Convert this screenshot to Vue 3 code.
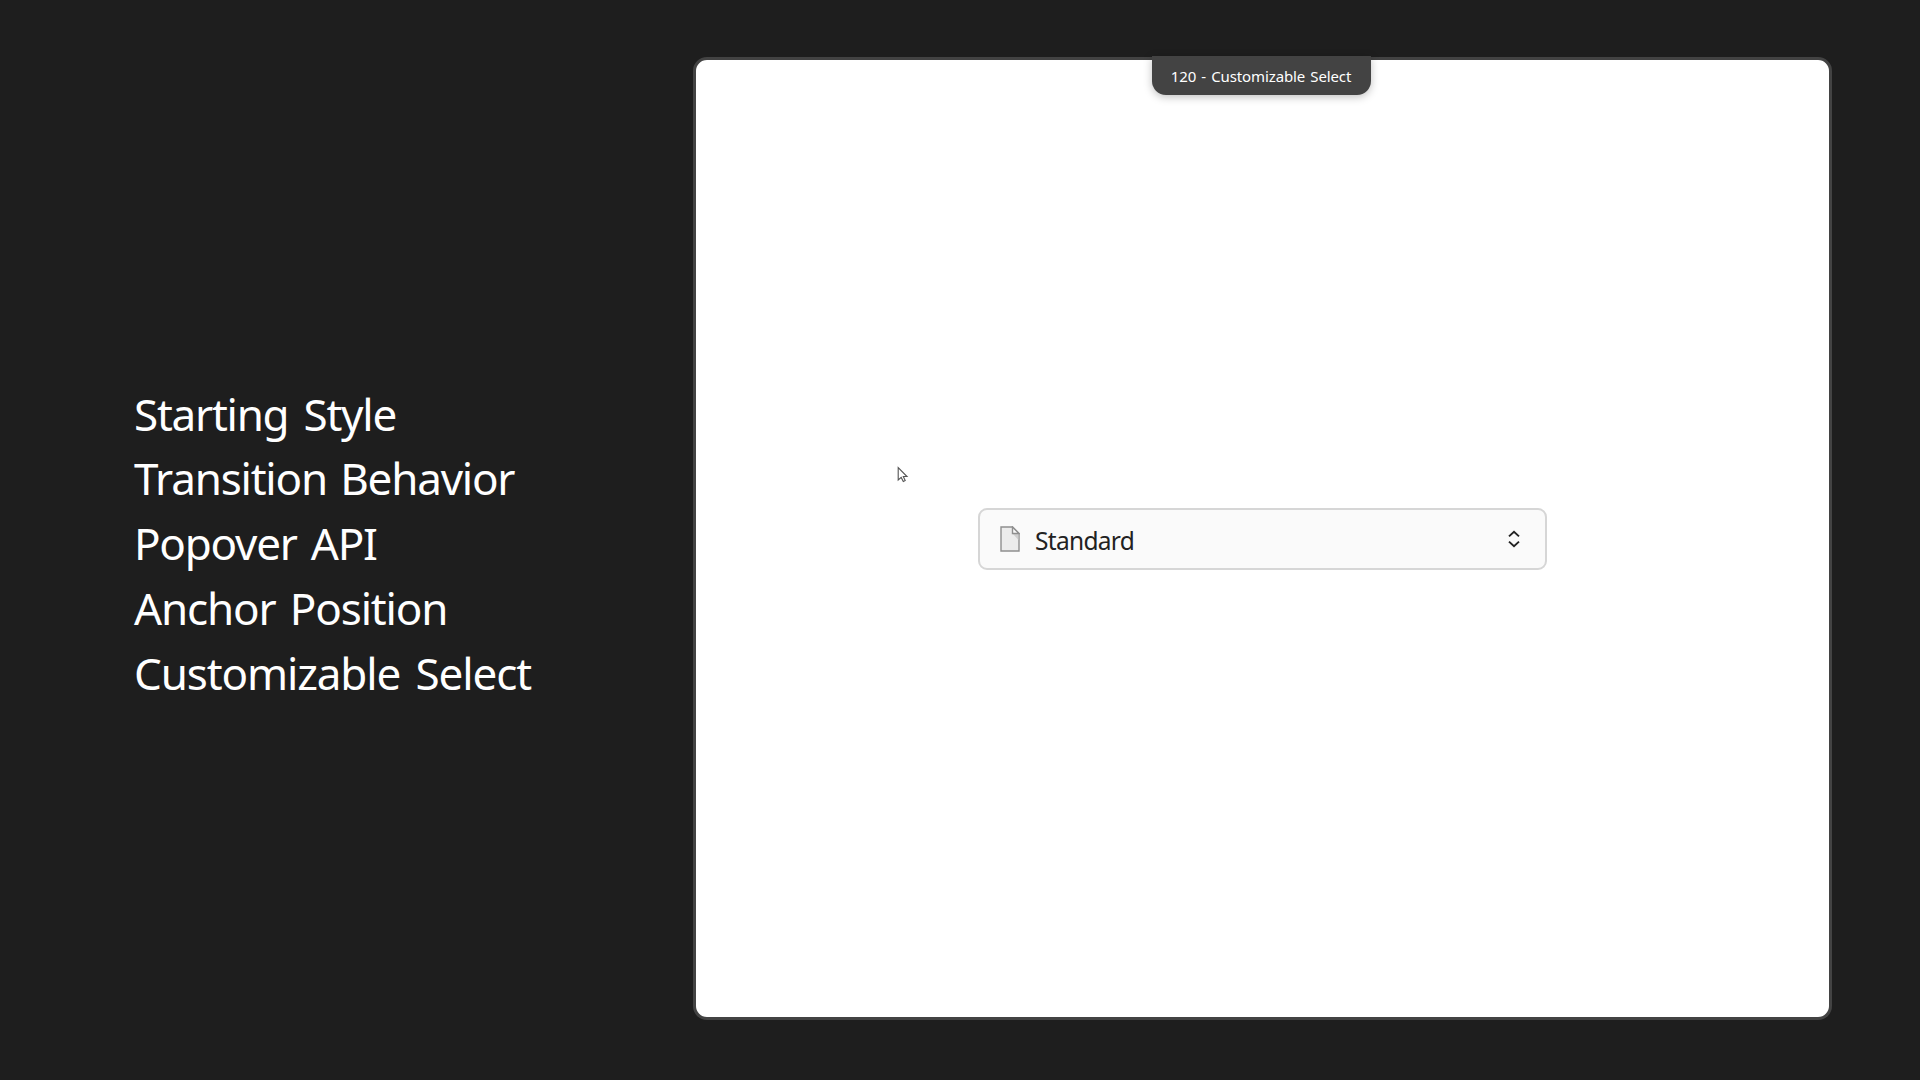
<script setup>
const topics = [
  { label: 'Starting Style', cls: 't-start' },
  { label: 'Transition Behavior', cls: 't-trans' },
  { label: 'Popover API', cls: 't-pop' },
  { label: 'Anchor Position', cls: 't-anchor' },
  { label: 'Customizable Select', cls: 't-select' },
]
</script>

<template>
  <main class="slide">
    <ul class="topics">
      <li v-for="topic in topics" :key="topic.label" :class="topic.cls">{{ topic.label }}</li>
    </ul>

    <section class="demo">
      <div class="tab">120 - Customizable Select</div>

      <button class="select" type="button">
        <svg class="file" viewBox="0 0 20 26" aria-hidden="true">
          <path d="M1 1H12.5L19 7.5V25H1Z" fill="#ececec" stroke="#8f8f8f" stroke-width="1.4" />
          <path d="M12.5 7.5L18.4 14V7.5Z" fill="#cfcfcf" />
          <path d="M12.5 1V7.5H19Z" fill="#fafafa" stroke="#8f8f8f" stroke-width="1.4" />
        </svg>
        <span class="value">Standard</span>
        <svg class="chevrons" viewBox="0 0 12 18" aria-hidden="true">
          <path d="M1 6.4L6 1.8L11 6.4M1 11.6L6 16.2L11 11.6" />
        </svg>
      </button>

      <svg class="cursor" viewBox="0 0 12 17" aria-hidden="true">
        <path d="M1.2 1.5V14L4.2 11.4L6.3 15.5L8.2 14.6L6.3 10.5H10Z" />
      </svg>
    </section>
  </main>
</template>

<style>
body {
  margin: 0;
  background: #1e1e1e;
}
</style>

<style scoped>
.slide {
  display: flex;
  align-items: flex-start;
  box-sizing: border-box;
  width: 1920px;
  height: 1080px;
  padding-top: 57px;
  overflow: hidden;
  background: #1e1e1e;
  font-family: "Noto Sans", "Open Sans", sans-serif;
}

.topics {
  width: 558.5px;
  margin: 324.5px 0 0 134px;
  padding: 0;
  list-style: none;
  color: #fff;
  font-size: 44px;
  line-height: 64.8px;
  white-space: nowrap;
}

/* Tracking is tuned per line */
.t-start {
  letter-spacing: -1.25px;
  word-spacing: 5px;
}

.t-trans {
  letter-spacing: -1.2px;
  word-spacing: 3px;
}

.t-pop {
  letter-spacing: -1.25px;
  word-spacing: 4px;
}

.t-anchor {
  letter-spacing: -1.15px;
  word-spacing: 4px;
}

.t-select {
  letter-spacing: -1.12px;
  word-spacing: 5px;
}

.demo {
  position: relative;
  display: flex;
  align-items: center;
  justify-content: center;
  box-sizing: border-box;
  width: 1139px;
  height: 963px;
  border: 3px solid #434343;
  border-radius: 14px;
  background: #fff;
}

/* Tab hangs from the frame's top edge */
.tab {
  position: absolute;
  top: -4px;
  left: 456px;
  width: 219px;
  height: 39px;
  border-radius: 0 0 14px 14px;
  background: #434343;
  box-shadow: 0 2px 8px rgba(0, 0, 0, 0.25);
  color: #fff;
  font-size: 15px;
  line-height: 41px;
  letter-spacing: -0.12px;
  word-spacing: 1.4px;
  text-align: center;
  white-space: nowrap;
}

.select {
  display: flex;
  align-items: center;
  box-sizing: border-box;
  width: 569px;
  height: 62px;
  margin-top: 1px;
  padding: 0 25px 0 20px;
  border: 2px solid #d6d6d6;
  border-radius: 9px;
  background: #fafafa;
  color: #222;
  font-family: inherit;
  font-size: 24.5px;
}

.file {
  width: 20px;
  height: 26px;
}

.value {
  margin-left: 15.5px;
  padding-top: 2px;
  letter-spacing: -0.7px;
}

.chevrons {
  width: 12px;
  height: 18px;
  margin: 0 0 1px auto;
  fill: none;
  stroke: #222;
  stroke-width: 1.9;
}

.cursor {
  position: absolute;
  top: 406px;
  left: 201px;
  width: 12px;
  height: 17px;
  fill: #fff;
  stroke: #555;
  stroke-width: 1.1;
}
</style>
